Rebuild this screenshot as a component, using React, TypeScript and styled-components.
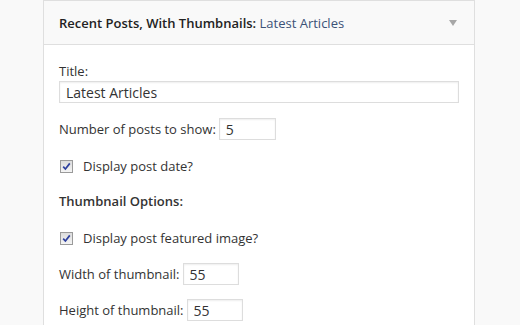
import React from "react";
import styled, { createGlobalStyle } from "styled-components";

const Global = createGlobalStyle`
  html, body { margin: 0; padding: 0; background: #f9f9f9; }
  body { font-family: "Open Sans", "Liberation Sans", sans-serif; color: #333; }
`;

const Page = styled.div`
  padding-left: 43px;
  width: 520px;
  height: 325px;
  box-sizing: border-box;
  overflow: hidden;
`;

const Widget = styled.div`
  width: 432px;
  box-sizing: border-box;
  border: 1px solid #dfdfdf;
  background: #fff;
  min-height: 340px;
`;

const Header = styled.div`
  height: 43px;
  background: #f9f9f9;
  border-bottom: 1px solid #dfdfdf;
  display: flex;
  align-items: center;
  justify-content: space-between;
  padding: 0 17px 0 15px;
`;

const HeaderTitle = styled.h4`
  margin: 0;
  font-size: 13px;
  font-weight: 600;
  color: #222;
`;

const InTitle = styled.span`
  font-weight: 400;
  color: #3c5277;
`;

const Arrow = styled.span`
  width: 0;
  height: 0;
  border-left: 4px solid transparent;
  border-right: 4px solid transparent;
  border-top: 6px solid #a7a7a7;
  margin-top: 1px;
`;

const Body = styled.div`
  padding: 17px 15px 0;
  font-size: 13px;
  line-height: 18px;
`;

const Label = styled.div`
  color: #333;
`;

const TextInput = styled.input<{ $w?: number }>`
  box-sizing: border-box;
  height: 22px;
  width: ${(p) => (p.$w ? `${p.$w}px` : "100%")};
  border: 1px solid #ddd;
  box-shadow: inset 0 1px 2px rgba(0, 0, 0, 0.07);
  background: #fff;
  font-family: "Open Sans", "Liberation Sans", sans-serif;
  font-size: 14px;
  color: #333;
  padding: 0 6px;
  margin: 0;
  outline: none;
  display: block;
`;

const FullInput = styled(TextInput)`
  margin-top: 1px;
`;

const Row = styled.div<{ $mt: number; $gap?: number }>`
  display: flex;
  align-items: center;
  gap: ${(p) => p.$gap ?? 3}px;
  margin-top: ${(p) => p.$mt}px;
`;

const Heading = styled.div<{ $mt: number }>`
  margin-top: ${(p) => p.$mt}px;
  font-weight: 600;
  color: #333;
`;

const Box = styled.span`
  box-sizing: border-box;
  width: 13px;
  height: 13px;
  margin-left: 1px;
  border: 1px solid #9a9a9a;
  background: linear-gradient(#dcdcdc, #f4f4f4);
  display: flex;
  align-items: center;
  justify-content: center;
`;

const Check = () => (
  <Box>
    <svg width="9" height="9" viewBox="0 0 9 9">
      <path d="M1.2 4.6 L3.4 7 L7.8 1.4" fill="none" stroke="#2d3f9e" strokeWidth="1.7" />
    </svg>
  </Box>
);

export default function App() {
  return (
    <Page>
      <Global />
      <Widget>
        <Header>
          <HeaderTitle>
            Recent Posts, With Thumbnails: <InTitle>Latest Articles</InTitle>
          </HeaderTitle>
          <Arrow />
        </Header>
        <Body>
          <Label>Title:</Label>
          <FullInput defaultValue="Latest Articles" />
          <Row $mt={15}>
            <Label>Number of posts to show:</Label>
            <TextInput $w={57} defaultValue="5" />
          </Row>
          <Row $mt={17} $gap={10}>
            <Check />
            <Label>Display post date?</Label>
          </Row>
          <Heading $mt={17}>Thumbnail Options:</Heading>
          <Row $mt={19} $gap={10}>
            <Check />
            <Label>Display post featured image?</Label>
          </Row>
          <Row $mt={16}>
            <Label>Width of thumbnail:</Label>
            <TextInput $w={56} defaultValue="55" />
          </Row>
          <Row $mt={14}>
            <Label>Height of thumbnail:</Label>
            <TextInput $w={56} defaultValue="55" />
          </Row>
        </Body>
      </Widget>
    </Page>
  );
}
